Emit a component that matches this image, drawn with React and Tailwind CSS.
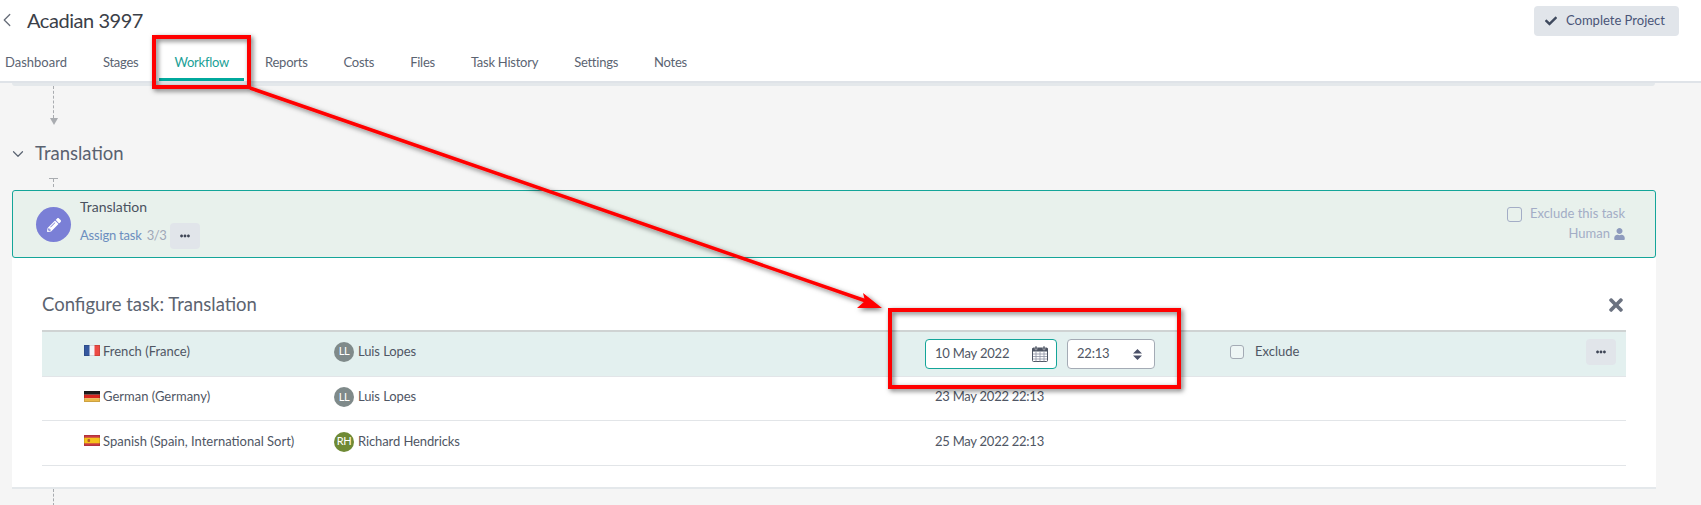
import { ChevronDown, ChevronLeft } from 'lucide-react';
import { FaCheck, FaEllipsisH, FaPencilAlt, FaTimes, FaUser } from 'react-icons/fa';

const tabs = ['Dashboard', 'Stages', 'Workflow', 'Reports', 'Costs', 'Files', 'Task History', 'Settings', 'Notes'];

const FlagFR = () => (
  <svg width="16" height="11" viewBox="0 0 16 11" className="shrink-0 -mt-[2px]">
    <rect width="16" height="11" fill="#f4f4f8" />
    <rect width="5.5" height="11" fill="#35589f" />
    <rect x="10.5" width="5.5" height="11" fill="#ec4a44" />
    <rect x="0.5" y="0.5" width="15" height="10" fill="none" stroke="#000" strokeOpacity="0.12" />
  </svg>
);

const FlagDE = () => (
  <svg width="16" height="11" viewBox="0 0 16 11" className="shrink-0 -mt-[2px]">
    <rect width="16" height="3.7" fill="#1c1c1c" />
    <rect y="3.7" width="16" height="3.6" fill="#d8261f" />
    <rect y="7.3" width="16" height="3.7" fill="#eab94a" />
    <rect x="0.5" y="0.5" width="15" height="10" fill="none" stroke="#000" strokeOpacity="0.12" />
  </svg>
);

const FlagES = () => (
  <svg width="16" height="11" viewBox="0 0 16 11" className="shrink-0 -mt-[2px]">
    <rect width="16" height="11" fill="#cb3a45" />
    <rect y="2.7" width="16" height="5.6" fill="#f6c21c" />
    <rect x="3.5" y="4" width="2.6" height="3" rx="1" fill="#b5562c" />
    <rect x="0.5" y="0.5" width="15" height="10" fill="none" stroke="#000" strokeOpacity="0.12" />
  </svg>
);

const CalendarIcon = () => (
  <svg width="16" height="16" viewBox="0 0 16 16" className="shrink-0">
    <rect x="0.5" y="2" width="15" height="13.5" rx="1" fill="#fff" stroke="#4f5664" />
    <rect x="0.5" y="2" width="15" height="3.5" fill="#4f5664" />
    <path d="M1 8h14M1 10.5h14M1 13h14M4 5.5v10M8 5.5v10M12 5.5v10" stroke="#8d93a3" strokeWidth="0.8" fill="none" />
    <rect x="3" y="0" width="2" height="4" rx="1" fill="#4f5664" stroke="#fff" strokeWidth="0.4" />
    <rect x="11" y="0" width="2" height="4" rx="1" fill="#4f5664" stroke="#fff" strokeWidth="0.4" />
  </svg>
);

const SortIcon = () => (
  <svg width="9" height="11" viewBox="0 0 9 11" className="shrink-0">
    <path d="M4.5 0 L9 4.5 H0 Z M0 6.5 H9 L4.5 11 Z" fill="#4a5068" />
  </svg>
);

const Avatar = ({ initials, color }) => (
  <span className={`w-5 h-5 rounded-full flex items-center justify-center text-[11px] tracking-[-0.3px] text-white shrink-0 ${color}`}>
    {initials}
  </span>
);

const rows = [
  { flag: <FlagFR />, lang: 'French (France)', initials: 'LL', name: 'Luis Lopes', color: 'bg-[#7f8a8a]', height: 'h-[45px]' },
  { flag: <FlagDE />, lang: 'German (Germany)', initials: 'LL', name: 'Luis Lopes', color: 'bg-[#7f8a8a]', date: '23 May 2022 22:13', height: 'h-[44px]' },
  { flag: <FlagES />, lang: 'Spanish (Spain, International Sort)', initials: 'RH', name: 'Richard Hendricks', color: 'bg-[#6f8a35]', date: '25 May 2022 22:13', height: 'h-[45px]' },
];

const MoreButton = () => (
  <button className="w-[30px] h-[26px] bg-[#e1e5ea] rounded-[4px] flex items-center justify-center text-[#3f4656]">
    <FaEllipsisH className="w-[10px] h-[10px]" />
  </button>
);

const DashedLine = ({ height }) => (
  <div className={`ml-[53px] border-l border-dashed border-[#a9acb0] ${height}`} />
);

const App = () => {
  return (
    <div className="relative w-[1701px] h-[505px] overflow-hidden bg-[#f5f5f5] text-[#4f5664] text-[13px] font-['Lato','Noto_Sans',sans-serif]">
      {/* Header */}
      <header className="h-[83px] bg-white border-b-2 border-[#dfe3e8]">
        <div className="flex justify-between h-[42px]">
          <div className="flex items-center pb-[3px]">
            <ChevronLeft className="w-[22px] h-[22px] -ml-[4px] text-[#666c78]" strokeWidth={1.4} />
            <h1 className="ml-[9px] text-[20px] tracking-[-0.45px] text-[#3b4048]">Acadian 3997</h1>
          </div>
          <button className="mt-[6px] mr-[22px] w-[145px] h-[30px] bg-[#e1e5ea] rounded-[4px] flex items-center pl-[11px] gap-[9px] text-[#4a5578]">
            <FaCheck className="w-[12px] h-[12px] text-[#3f4a5e]" />
            Complete Project
          </button>
        </div>
        <nav className="flex h-[39px] pl-[2px] tracking-[-0.25px]">
          {tabs.map((tab) => (
            <a
              key={tab}
              className={`mx-[3px] px-[15px] first:pl-0 first:tracking-normal pt-[11px] border-b-[3px] whitespace-nowrap ${
                tab === 'Workflow' ? 'border-[#00a99d] text-[#1a9f97]' : 'border-transparent text-[#5b6472]'
              }`}
            >
              {tab}
            </a>
          ))}
        </nav>
      </header>
      <div className="mx-[12px] w-[1643px] h-[3px] bg-[#e4e8eb] rounded-b-[4px]" />

      {/* Connector down to section */}
      <DashedLine height="h-[32px]" />
      <div className="ml-[50px] w-0 h-0 border-x-[4px] border-x-transparent border-t-[7px] border-t-[#a9acb0]" />

      {/* Section title */}
      <div className="flex items-center h-[30px] mt-[14px] pl-[9px] gap-[8px]">
        <ChevronDown className="w-[18px] h-[18px] text-[#5b6472]" strokeWidth={1.6} />
        <h2 className="text-[18.5px] text-[#5a6270]">Translation</h2>
      </div>
      <div className="ml-[49px] w-[9px] h-px mt-[9px] bg-[#a9acb0]" />
      <div className="h-[11px]"><DashedLine height="h-[8px]" /></div>

      {/* Task card */}
      <div className="mx-[12px] w-[1644px]">
        <div className="h-[68px] flex justify-between bg-[#e8f1ec] border border-[#14a599] rounded-[3px]">
          <div className="flex pl-[23px] pt-[16px]">
            <div className="w-[35px] h-[35px] rounded-full bg-[#7a7fd6] flex items-center justify-center text-white">
              <FaPencilAlt className="w-[14px] h-[14px]" />
            </div>
            <div className="ml-[9px] -mt-[9px]">
              <div className="text-[14px] leading-[18px] text-[#4a5260]">Translation</div>
              <div className="flex items-center mt-[7px]">
                <a className="tracking-[-0.2px] text-[#6c8ebf]">Assign task</a>
                <span className="ml-[5px] tracking-[-0.4px] text-[#a0a8b8]">3/3</span>
                <span className="ml-[4px]"><MoreButton /></span>
              </div>
            </div>
          </div>
          <div className="flex flex-col items-end pr-[30px] pt-[14px] text-[#a3adc6]">
            <label className="flex items-center gap-[8px] h-[18px]">
              <span className="w-[15px] h-[15px] border border-[#a3adc6] rounded-[3px]" />
              Exclude this task
            </label>
            <div className="flex items-center gap-[4px] mt-[1px]">
              Human
              <FaUser className="w-[11px] h-[12px] text-[#8e9bbd]" />
            </div>
          </div>
        </div>

        {/* Configure panel */}
        <div className="h-[231px] bg-white border-b-2 border-[#e4e8eb] px-[30px] pt-[32px]">
          <div className="flex justify-between items-center h-[32px] -mt-[1px]">
            <h3 className="text-[18.5px] text-[#5c6470]">Configure task: Translation</h3>
            <FaTimes className="w-[20px] h-[20px] text-[#6b7280]" />
          </div>
          <div className="mt-[9px] border-t-2 border-[#cfd3d3] w-[1584px]">
            {rows.map((row, i) => (
              <div
                key={row.lang}
                className={`grid grid-cols-[292px_591px_305px_1fr] items-center border-b border-[#e2e5e8] ${row.height} ${i === 0 ? 'bg-[#e3f0ef]' : ''}`}
              >
                <div className={`flex items-center gap-[3px] pl-[42px] ${i === 0 ? 'pb-[5px]' : 'pb-[3px]'}`}>
                  {row.flag}
                  {row.lang}
                </div>
                <div className={`flex items-center gap-[4px] tracking-[-0.1px] ${i === 0 ? 'pb-[5px]' : 'pb-[3px]'}`}>
                  <Avatar initials={row.initials} color={row.color} />
                  {row.name}
                </div>
                {i === 0 ? (
                  <div className="flex items-center gap-[10px] tracking-[-0.2px]">
                    <div className="w-[132px] h-[30px] flex items-center justify-between pl-[9px] pr-[8px] bg-white border border-[#14a599] rounded-[4px]">
                      10 May 2022
                      <CalendarIcon />
                    </div>
                    <div className="w-[88px] h-[30px] flex items-center justify-between pl-[9px] pr-[12px] bg-white border border-[#a4abb5] rounded-[4px]">
                      22:13
                      <SortIcon />
                    </div>
                  </div>
                ) : (
                  <div className="pl-[10px] pb-[3px] tracking-[-0.25px]">{row.date}</div>
                )}
                {i === 0 ? (
                  <div className="flex items-center justify-between pr-[10px]">
                    <label className="flex items-center gap-[11px] pb-[5px]">
                      <span className="w-[14px] h-[14px] bg-white/40 border border-[#a4abb5] rounded-[3px]" />
                      Exclude
                    </label>
                    <span className="pb-[4px]"><MoreButton /></span>
                  </div>
                ) : (
                  <div />
                )}
              </div>
            ))}
          </div>
        </div>
      </div>
      <DashedLine height="h-[17px]" />

      {/* Red annotations drawn over the page */}
      <svg className="absolute inset-0 pointer-events-none" width="1701" height="505">
        <defs>
          <filter id="shadow" x="-5%" y="-5%" width="110%" height="110%">
            <feDropShadow dx="2" dy="2" stdDeviation="2.5" floodColor="#000" floodOpacity="0.55" />
          </filter>
        </defs>
        <g filter="url(#shadow)">
          <rect x="154" y="37" width="95" height="50" fill="none" stroke="#f00" strokeWidth="4" />
          <rect x="890" y="310" width="289" height="77" fill="none" stroke="#f00" strokeWidth="4" />
          <line x1="250" y1="88" x2="866" y2="301" stroke="#f00" strokeWidth="3.5" />
          <polygon points="882,308 857,308 865,301 863,293" fill="#f00" />
        </g>
      </svg>
    </div>
  );
};

export default App;
